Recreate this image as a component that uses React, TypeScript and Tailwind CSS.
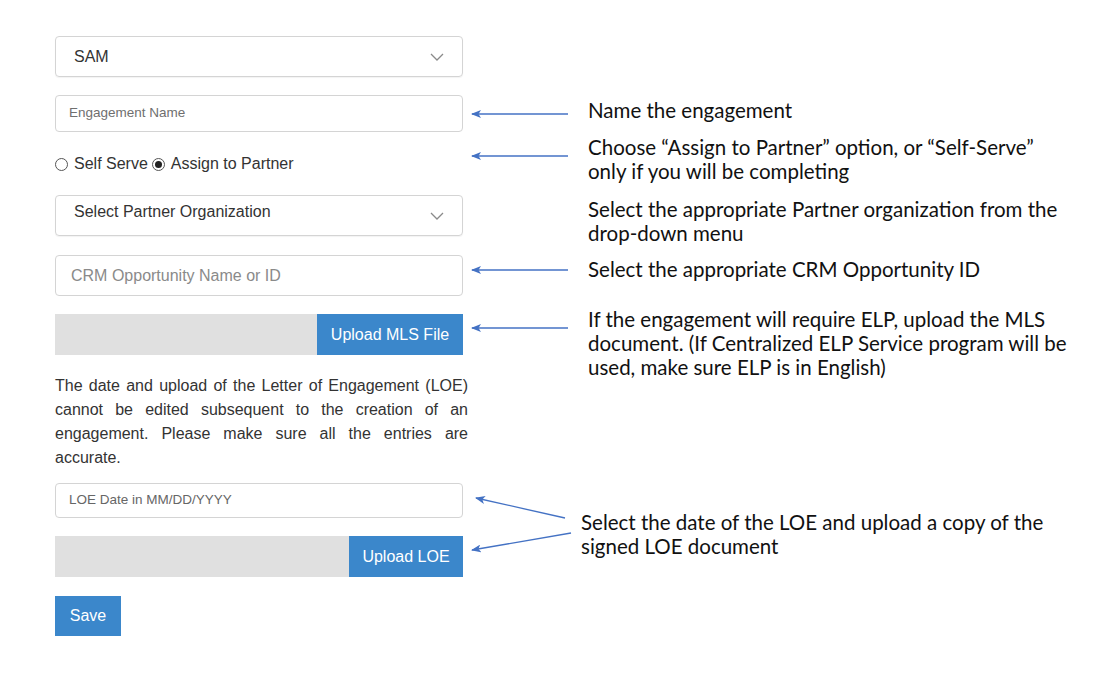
import React from "react";

const Chevron = () => (
  <svg width="14" height="8" viewBox="0 0 14 8" className="shrink-0">
    <path d="M1 1 L7 7 L13 1" fill="none" stroke="#8a8a8a" strokeWidth="1.3" />
  </svg>
);

const Note = ({ x, y, children }: { x: number; y: number; children: React.ReactNode }) => (
  <div
    className="absolute text-[20.5px] leading-[24px] text-[#111] whitespace-nowrap"
    style={{ left: x, top: y, fontFamily: "Lato, 'Open Sans', sans-serif" }}
  >
    {children}
  </div>
);

export default function App() {
  const sans = { fontFamily: "'Liberation Sans', Arial, sans-serif" };
  return (
    <div className="relative w-[1099px] h-[685px] bg-white overflow-hidden" style={sans}>
      <div className="flex flex-col pl-[55px] pt-[36px] w-[470px]">
        {/* SAM select */}
        <div className="w-[408px] h-[41px] border border-[#d4d4d4] rounded-[4px] flex items-center justify-between pl-[18px] pr-[18px] shadow-[0_1px_1px_rgba(0,0,0,0.05)]">
          <span className="text-[16px] text-[#333]">SAM</span>
          <Chevron />
        </div>
        {/* Engagement name */}
        <div className="mt-[18px] w-[408px] h-[37px] border border-[#d4d4d4] rounded-[4px] flex items-center pl-[13px]">
          <span className="text-[13.5px] text-[#6f6f6f]">Engagement Name</span>
        </div>
        {/* Radios */}
        <div className="mt-[22px] h-[20px] flex items-center text-[16px] text-[#333]">
          <span className="w-[13px] h-[13px] rounded-full border border-[#555] mr-[6px]" />
          <span>Self Serve</span>
          <span className="ml-[4px] mr-[6px] w-[13px] h-[13px] rounded-full border border-[#555] flex items-center justify-center">
            <span className="w-[7px] h-[7px] rounded-full bg-[#222]" />
          </span>
          <span>Assign to Partner</span>
        </div>
        {/* Select partner */}
        <div className="mt-[21px] w-[408px] h-[41px] border border-[#d4d4d4] rounded-[4px] flex items-center justify-between pl-[18px] pr-[18px] shadow-[0_1px_1px_rgba(0,0,0,0.05)]">
          <span className="text-[16px] text-[#333] -mt-[8px]">Select Partner Organization</span>
          <Chevron />
        </div>
        {/* CRM */}
        <div className="mt-[19px] w-[408px] h-[41px] border border-[#d4d4d4] rounded-[4px] flex items-center pl-[15px]">
          <span className="text-[16px] text-[#8a8a8a]">CRM Opportunity Name or ID</span>
        </div>
        {/* Upload MLS */}
        <div className="mt-[18px] w-[408px] h-[41px] flex">
          <div className="flex-1 bg-[#e0e0e0]" />
          <div className="w-[146px] bg-[#3b87cb] flex items-center justify-center text-white text-[16px]">
            Upload MLS File
          </div>
        </div>
        {/* Paragraph */}
        <p className="mt-[19px] w-[413px] text-[16px] leading-[24px] text-[#333] text-justify">
          The date and upload of the Letter of Engagement (LOE) cannot be edited subsequent to the creation of an
          engagement. Please make sure all the entries are accurate.
        </p>
        {/* LOE date */}
        <div className="mt-[13px] w-[408px] h-[35px] border border-[#d4d4d4] rounded-[4px] flex items-center pl-[13px]">
          <span className="text-[13.5px] text-[#666]">LOE Date in MM/DD/YYYY</span>
        </div>
        {/* Upload LOE */}
        <div className="mt-[18px] w-[408px] h-[41px] flex">
          <div className="flex-1 bg-[#e0e0e0]" />
          <div className="w-[114px] bg-[#3b87cb] flex items-center justify-center text-white text-[16px]">
            Upload LOE
          </div>
        </div>
        {/* Save */}
        <div className="mt-[19px] w-[66px] h-[40px] bg-[#3b87cb] flex items-center justify-center text-white text-[16px]">
          Save
        </div>
      </div>

      {/* Arrows */}
      <svg className="absolute left-0 top-0 pointer-events-none" width="1099" height="685">
        <defs>
          <marker id="ah" markerWidth="10" markerHeight="8" refX="9" refY="4" orient="auto" markerUnits="userSpaceOnUse">
            <path d="M10 4 L0 0 L2.5 4 L0 8 Z" fill="#4472c4" />
          </marker>
        </defs>
        <g stroke="#4472c4" strokeWidth="1.3">
          <line x1="568" y1="114" x2="472" y2="114" markerEnd="url(#ah)" />
          <line x1="568" y1="156" x2="472" y2="156" markerEnd="url(#ah)" />
          <line x1="568" y1="270" x2="472" y2="270" markerEnd="url(#ah)" />
          <line x1="568" y1="328" x2="472" y2="328" markerEnd="url(#ah)" />
          <line x1="565" y1="518" x2="476" y2="498" markerEnd="url(#ah)" />
          <line x1="571" y1="533" x2="472" y2="550" markerEnd="url(#ah)" />
        </g>
      </svg>

      {/* Notes */}
      <Note x={588} y={98}>Name the engagement</Note>
      <Note x={588} y={135}>
        Choose “Assign to Partner” option, or “Self-Serve”
        <br />
        only if you will be completing
      </Note>
      <Note x={588} y={197}>
        Select the appropriate Partner organization from the
        <br />
        drop-down menu
      </Note>
      <Note x={588} y={257}>Select the appropriate CRM Opportunity ID</Note>
      <Note x={588} y={307}>
        If the engagement will require ELP, upload the MLS
        <br />
        document. (If Centralized ELP Service program will be
        <br />
        used, make sure ELP is in English)
      </Note>
      <Note x={581} y={510}>
        Select the date of the LOE and upload a copy of the
        <br />
        signed LOE document
      </Note>
    </div>
  );
}
